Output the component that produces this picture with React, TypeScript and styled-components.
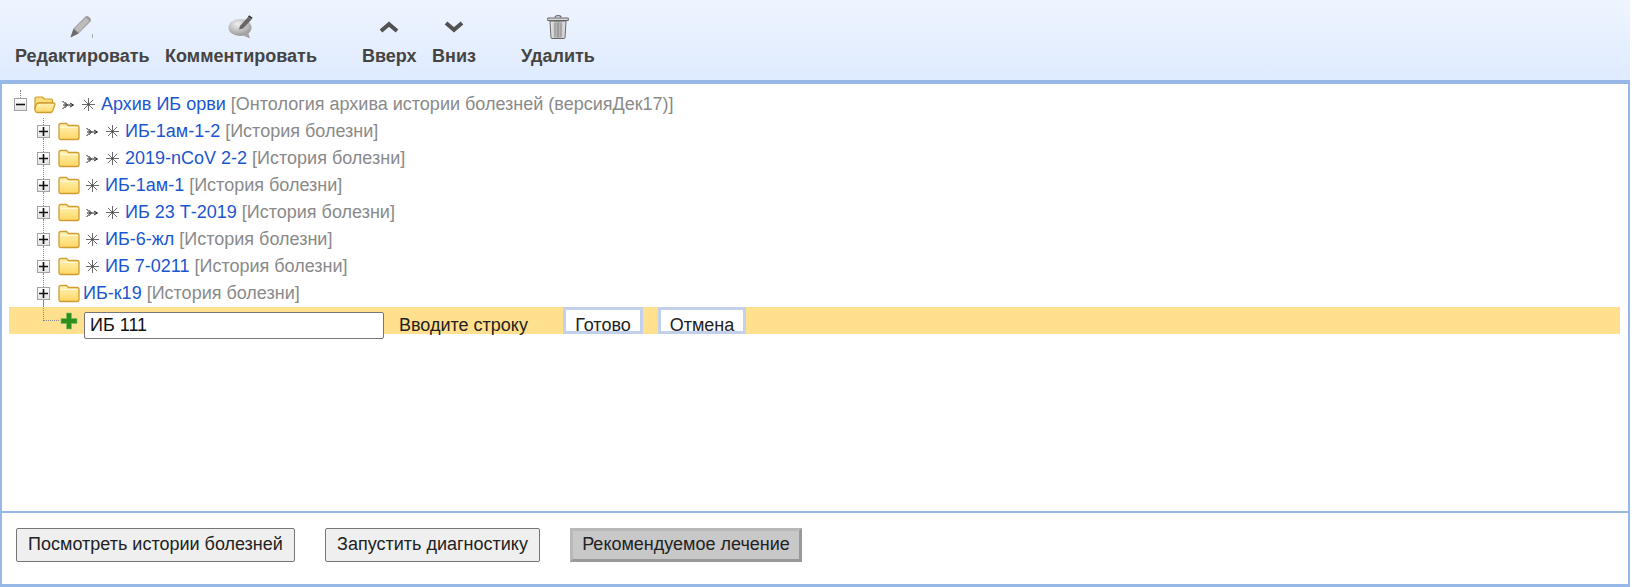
import React from "react";
import styled, { createGlobalStyle } from "styled-components";

const Global = createGlobalStyle`
  html, body { margin: 0; padding: 0; background: #fff; }
  body { font-family: "Liberation Sans", Arial, sans-serif; font-size: 18px; overflow: hidden; }
`;

const Page = styled.div`
  width: 1632px;
  height: 587px;
  box-sizing: border-box;
  display: flex;
  flex-direction: column;
`;

const Toolbar = styled.div`
  height: 80px;
  flex: none;
  width: 1630px;
  display: flex;
  align-items: flex-start;
  padding: 14px 0 0 15px;
  box-sizing: border-box;
  background: linear-gradient(#eff5ff, #deeafe);
`;

const ToolItem = styled.div<{ $gap: number }>`
  display: flex;
  flex-direction: column;
  align-items: center;
  margin-right: ${(p) => p.$gap}px;
`;

const ToolIcon = styled.div`
  height: 25px;
  display: flex;
  align-items: center;
  justify-content: center;
`;

const ToolLabel = styled.div`
  margin-top: 8px;
  font-weight: 700;
  font-size: 18px;
  line-height: 18px;
  color: #444;
  white-space: nowrap;
`;

const Frame = styled.div`
  flex: 1;
  display: flex;
  flex-direction: column;
  min-height: 0;
  width: 1630px;
  box-sizing: border-box;
  border-top: 4px solid #95b8e7;
  border-left: 2px solid #95b8e7;
  border-right: 2px solid #95b8e7;
  border-bottom: 3px solid #95b8e7;
`;

const TreePanel = styled.div`
  flex: 1;
  padding: 7px 8px 0 7px;
  border-bottom: 2px solid #95b8e7;
`;

const Row = styled.div<{ $indent: number }>`
  position: relative;
  height: 27px;
  display: flex;
  align-items: center;
  padding-left: ${(p) => p.$indent}px;
  line-height: 20px;
  white-space: nowrap;
`;

const NewRow = styled(Row)`
  background: #ffe08e;
`;

const Expander = styled.span<{ $stem: "root" | "mid" }>`
  position: relative;
  flex: none;
  width: 13px;
  height: 13px;
  box-sizing: border-box;
  border: 1px solid #a3a3a3;
  background: linear-gradient(#fff, #e4e4e4);
  margin-right: ${(p) => (p.$stem === "root" ? 7 : 8)}px;
  display: flex;
  align-items: center;
  justify-content: center;
  &::before {
    content: "";
    position: absolute;
    left: 5px;
    top: ${(p) => (p.$stem === "root" ? -9 : -8)}px;
    height: ${(p) => (p.$stem === "root" ? 8 : 7)}px;
    border-left: 1px dotted #888;
  }
  &::after {
    content: "";
    position: absolute;
    left: 5px;
    top: 12px;
    height: ${(p) => (p.$stem === "root" ? 0 : 8)}px;
    border-left: 1px dotted #888;
  }
`;

const Stem = styled.span`
  position: absolute;
  left: 34px;
  top: -7px;
  width: 15px;
  height: 20px;
  border-left: 1px dotted #888;
  border-bottom: 1px dotted #888;
`;

const ArrowSlot = styled.span`
  flex: none;
  display: inline-flex;
  margin-left: 6px;
`;

const StarSlot = styled.span<{ $left: number }>`
  flex: none;
  display: inline-flex;
  margin-left: ${(p) => p.$left}px;
`;

const Link = styled.span<{ $left: number }>`
  color: #1a56cf;
  margin: -2px 0 0 ${(p) => p.$left}px;
`;

const Kind = styled.span`
  color: #8a8a8a;
  margin: -2px 0 0 5px;
`;

const TextInput = styled.input`
  box-sizing: border-box;
  width: 300px;
  height: 27px;
  margin: 5px 0 0 6px;
  align-self: flex-start;
  padding: 1px 5px;
  border: 1px solid #767676;
  border-radius: 2px;
  font: 18px "Liberation Sans", Arial, sans-serif;
  color: #111;
  background: #fff;
`;

const Hint = styled.span`
  margin: 8px 0 0 15px;
  width: 164px;
  color: #222;
`;

const MiniButton = styled.button<{ $w: number; $gap: number }>`
  box-sizing: border-box;
  width: ${(p) => p.$w}px;
  margin-right: ${(p) => p.$gap}px;
  height: 27px;
  padding: 5px 0 0;
  line-height: 18px;
  overflow: hidden;
  background: #fff;
  border: 3px solid #c3d0ec;
  font: 18px "Liberation Sans", Arial, sans-serif;
  color: #222;
`;

const Footer = styled.div`
  height: 71px;
  flex: none;
  display: flex;
  align-items: flex-start;
  padding: 15px 0 0 14px;
  box-sizing: border-box;
`;

const ActionButton = styled.button<{ $w: number; $gap: number }>`
  box-sizing: border-box;
  width: ${(p) => p.$w}px;
  height: 34px;
  margin-right: ${(p) => p.$gap}px;
  padding: 0 0 2px;
  background: #efefef;
  border: 1px solid #767676;
  border-radius: 2px;
  font: 18px "Liberation Sans", Arial, sans-serif;
  color: #222;
`;

const PressedButton = styled(ActionButton)`
  background: #c8c8c8;
  border-radius: 0;
  border-width: 3px;
  border-style: solid;
  border-color: #b8b8b8 #999 #999 #b8b8b8;
`;

const Defs = styled.svg`
  position: absolute;
  width: 0;
  height: 0;
`;

const FolderDefs = () => (
  <Defs aria-hidden="true">
    <defs>
      <linearGradient id="fold" x1="0" y1="0" x2="0" y2="1">
        <stop offset="0" stopColor="#fff4b8" />
        <stop offset="1" stopColor="#ffd665" />
      </linearGradient>
      <linearGradient id="trash" x1="0" y1="0" x2="1" y2="0">
        <stop offset="0" stopColor="#f2f2f2" />
        <stop offset="0.5" stopColor="#a8a8a8" />
        <stop offset="1" stopColor="#ececec" />
      </linearGradient>
      <radialGradient id="bubble" cx="0.4" cy="0.3" r="0.8">
        <stop offset="0" stopColor="#f0f0f0" />
        <stop offset="1" stopColor="#8e8e8e" />
      </radialGradient>
    </defs>
  </Defs>
);

const ClosedFolder = () => (
  <svg width="22" height="19" viewBox="0 0 22 19">
    <path d="M1 3.5 Q1 1.5 3 1.5 H8.5 L10.5 3.5 H19 Q21 3.5 21 5.5 V15.5 Q21 17.5 19 17.5 H3 Q1 17.5 1 15.5 Z" fill="url(#fold)" stroke="#cf9c30" strokeWidth="1.3" />
    <path d="M2 5.5 H20" stroke="#fff8d8" strokeWidth="1" />
  </svg>
);

const OpenFolder = () => (
  <svg width="22" height="19" viewBox="0 0 22 19">
    <path d="M1 13 V4 Q1 2 3 2 H8.5 L10.5 4 H17.5 Q18.5 4 18.5 5.5 V8 H4 Z" fill="#fbdc7a" stroke="#cf9c30" strokeWidth="1.2" />
    <path d="M1 14.5 Q1.5 8 5 8 H19.5 Q21.5 8 20.7 10 L18.7 16 Q18 17.5 16.5 17.5 H4 Q1 17.5 1 14.5 Z" fill="url(#fold)" stroke="#cf9c30" strokeWidth="1.3" />
  </svg>
);

const Feather = () => (
  <svg width="12" height="10" viewBox="0 0 12 10">
    <path d="M0.5 1 L4.5 5 L0.5 9 M1 5 H11 M8 3 L11.5 5 L8 7" fill="none" stroke="#222" strokeWidth="1" />
    <path d="M3 2 L6 5 L3 8" fill="none" stroke="#555" strokeWidth="0.8" />
  </svg>
);

const Star = () => (
  <svg width="13" height="13" viewBox="0 0 13 13">
    <path d="M6.5 0 V13 M0 6.5 H13 M1.9 1.9 L11.1 11.1 M11.1 1.9 L1.9 11.1" fill="none" stroke="#444" strokeWidth="0.8" />
  </svg>
);

const Sign = ({ plus }: { plus: boolean }) => (
  <svg width="9" height="9" viewBox="0 0 9 9">
    <path d={plus ? "M0 4.5 H9 M4.5 0 V9" : "M0 4.5 H9"} stroke="#111" strokeWidth="1.6" />
  </svg>
);

const Plus = () => (
  <svg width="18" height="18" viewBox="0 0 18 18">
    <path d="M6.5 1 H11.5 V6.5 H17 V11.5 H11.5 V17 H6.5 V11.5 H1 V6.5 H6.5 Z" fill="#2d8f1d" stroke="#7fc06e" strokeWidth="0.6" />
  </svg>
);

const Pencil = () => (
  <svg width="24" height="24" viewBox="0 0 24 24">
    <path d="M0.5 22 L3.5 13.5 L15.5 1.5 Q17 0.5 18.5 1.5 L20.5 3.5 Q21.5 5 20.5 6.5 L8.5 18.5 Z" fill="#9a9a9a" />
    <path d="M4.5 13.5 L16 2.5 L19.5 6 L8.5 17.5 Z" fill="#bcbcbc" />
    <path d="M0.5 22.5 L3.5 14 L8.5 18.5 Z" fill="#6c6c6c" />
    <path d="M22.5 19 V23" stroke="#aaa" strokeWidth="1" />
  </svg>
);

const Comment = () => (
  <svg width="26" height="24" viewBox="0 0 26 24">
    <ellipse cx="12" cy="12.5" rx="11.5" ry="8.5" fill="url(#bubble)" />
    <path d="M14 20 L22 23.5 L20 17 Z" fill="#a4a4a4" />
    <path d="M11 14.5 L12 11 L20 2 L23.5 4.5 L15 13.5 Z" fill="#666" />
    <path d="M20.5 1 L24 3.5" stroke="#333" strokeWidth="2" />
  </svg>
);

const Chevron = ({ up }: { up: boolean }) => (
  <svg width="20" height="12" viewBox="0 0 20 12">
    <path d={up ? "M2 10 L10 3.2 L18 10" : "M2 2 L10 8.8 L18 2"} fill="none" stroke="#525252" strokeWidth="4" />
  </svg>
);

const Trash = () => (
  <svg width="22" height="24" viewBox="0 0 22 24">
    <path d="M8 2.5 Q8 0.7 11 0.7 Q14 0.7 14 2.5" fill="none" stroke="#666" strokeWidth="1.2" />
    <path d="M0.7 3 H21.3 V5.5 H0.7 Z" fill="#d8d8d8" stroke="#666" strokeWidth="1" />
    <path d="M3 6 H19 L18 22.5 Q18 23.5 17 23.5 H5 Q4 23.5 4 22.5 Z" fill="url(#trash)" stroke="#666" strokeWidth="1" />
    <path d="M8 8 V22 M11 8 V22 M14 8 V22" stroke="#8a8a8a" strokeWidth="1" />
  </svg>
);

const tools = [
  { label: "Редактировать", icon: <Pencil />, gap: 15.5 },
  { label: "Комментировать", icon: <Comment />, gap: 45 },
  { label: "Вверх", icon: <Chevron up />, gap: 15.5 },
  { label: "Вниз", icon: <Chevron up={false} />, gap: 45 },
  { label: "Удалить", icon: <Trash />, gap: 0 },
];

const children = [
  { name: "ИБ-1ам-1-2", arrow: true, star: true },
  { name: "2019-nCoV 2-2", arrow: true, star: true },
  { name: "ИБ-1ам-1", arrow: false, star: true },
  { name: "ИБ 23 Т-2019", arrow: true, star: true },
  { name: "ИБ-6-жл", arrow: false, star: true },
  { name: "ИБ 7-0211", arrow: false, star: true },
  { name: "ИБ-к19", arrow: false, star: false },
];

export default function App() {
  return (
    <Page>
      <Global />
      <FolderDefs />
      <Toolbar>
        {tools.map((t) => (
          <ToolItem key={t.label} $gap={t.gap}>
            <ToolIcon>{t.icon}</ToolIcon>
            <ToolLabel>{t.label}</ToolLabel>
          </ToolItem>
        ))}
      </Toolbar>
      <Frame>
        <TreePanel>
          <Row $indent={5}>
            <Expander $stem="root"><Sign plus={false} /></Expander>
            <OpenFolder />
            <ArrowSlot><Feather /></ArrowSlot>
            <StarSlot $left={8}><Star /></StarSlot>
            <Link $left={6}>Архив ИБ орви</Link>
            <Kind>[Онтология архива истории болезней (версияДек17)]</Kind>
          </Row>
          {children.map((c) => (
            <Row key={c.name} $indent={28}>
              <Expander $stem="mid"><Sign plus /></Expander>
              <ClosedFolder />
              {c.arrow && <ArrowSlot><Feather /></ArrowSlot>}
              {c.star && <StarSlot $left={c.arrow ? 8 : 6}><Star /></StarSlot>}
              <Link $left={c.star ? 6 : 3}>{c.name}</Link>
              <Kind>[История болезни]</Kind>
            </Row>
          ))}
          <NewRow $indent={51}>
            <Stem />
            <Plus />
            <TextInput defaultValue="ИБ 111" />
            <Hint>Вводите строку</Hint>
            <MiniButton $w={80} $gap={15}>Готово</MiniButton>
            <MiniButton $w={88} $gap={0}>Отмена</MiniButton>
          </NewRow>
        </TreePanel>
        <Footer>
          <ActionButton $w={279} $gap={30}>Посмотреть истории болезней</ActionButton>
          <ActionButton $w={215} $gap={30}>Запустить диагностику</ActionButton>
          <PressedButton $w={232} $gap={0}>Рекомендуемое лечение</PressedButton>
        </Footer>
      </Frame>
    </Page>
  );
}
